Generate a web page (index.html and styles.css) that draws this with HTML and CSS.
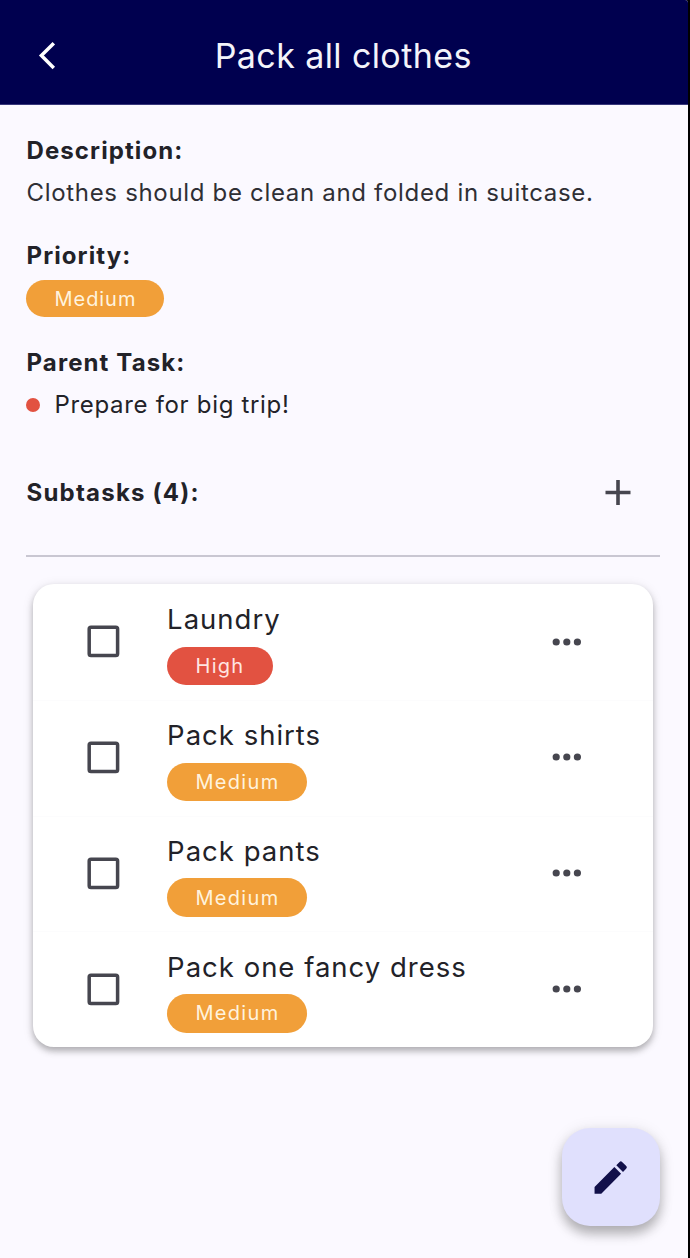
FILE: index.html
```html
<!DOCTYPE html>
<html lang="en">
<head>
<meta charset="utf-8">
<title>Pack all clothes</title>
<link rel="stylesheet" href="styles.css">
</head>
<body>
<div class="screen">
  <header class="appbar">
    <svg class="back" width="30" height="40" viewBox="0 0 30 40"><path d="M24.8 7.2 12.4 19.6 24.8 32" fill="none" stroke="#fff" stroke-width="3.5"/></svg>
    <h1 class="title">Pack all clothes</h1>
  </header>
  <main class="content">
    <h2 class="label label-description">Description:</h2>
    <p class="text text-description">Clothes should be clean and folded in suitcase.</p>
    <h2 class="label label-priority">Priority:</h2>
    <span class="pill pill-main medium">Medium</span>
    <h2 class="label label-parent">Parent Task:</h2>
    <p class="text parent"><span class="dot"></span><span class="parent-name">Prepare for big trip!</span></p>
    <div class="subhead">
      <h2 class="label label-subtasks">Subtasks (4):</h2>
      <svg width="26" height="26" viewBox="0 0 26 26"><path d="M.5 13.5h25M13 1v25" stroke="#46464f" stroke-width="3.6"/></svg>
    </div>
    <ul class="card">
      <li class="row">
        <svg class="box" width="33" height="33" viewBox="0 0 33 33"><rect x="2.2" y="2.2" width="28.4" height="28.4" rx="1.8"/></svg>
        <div class="info"><span class="name">Laundry</span><span class="pill high">High</span></div>
        <svg class="more" width="30" height="8" viewBox="0 0 30 8"><circle cx="4.2" cy="4" r="3.6"/><circle cx="14.8" cy="4" r="3.6"/><circle cx="25.4" cy="4" r="3.6"/></svg>
      </li>
      <li class="row">
        <svg class="box" width="33" height="33" viewBox="0 0 33 33"><rect x="2.2" y="2.2" width="28.4" height="28.4" rx="1.8"/></svg>
        <div class="info"><span class="name">Pack shirts</span><span class="pill medium">Medium</span></div>
        <svg class="more" width="30" height="8" viewBox="0 0 30 8"><circle cx="4.2" cy="4" r="3.6"/><circle cx="14.8" cy="4" r="3.6"/><circle cx="25.4" cy="4" r="3.6"/></svg>
      </li>
      <li class="row">
        <svg class="box" width="33" height="33" viewBox="0 0 33 33"><rect x="2.2" y="2.2" width="28.4" height="28.4" rx="1.8"/></svg>
        <div class="info"><span class="name">Pack pants</span><span class="pill medium">Medium</span></div>
        <svg class="more" width="30" height="8" viewBox="0 0 30 8"><circle cx="4.2" cy="4" r="3.6"/><circle cx="14.8" cy="4" r="3.6"/><circle cx="25.4" cy="4" r="3.6"/></svg>
      </li>
      <li class="row">
        <svg class="box" width="33" height="33" viewBox="0 0 33 33"><rect x="2.2" y="2.2" width="28.4" height="28.4" rx="1.8"/></svg>
        <div class="info"><span class="name">Pack one fancy dress</span><span class="pill medium">Medium</span></div>
        <svg class="more" width="30" height="8" viewBox="0 0 30 8"><circle cx="4.2" cy="4" r="3.6"/><circle cx="14.8" cy="4" r="3.6"/><circle cx="25.4" cy="4" r="3.6"/></svg>
      </li>
    </ul>
  </main>
  <button class="fab" aria-label="Edit">
    <svg width="43" height="43" viewBox="0 0 24 24"><path d="M3.1 17.25V21h3.75L17.91 9.94l-3.75-3.75L3.1 17.25zM20.81 7.04a1 1 0 0 0 0-1.41l-2.34-2.34a1 1 0 0 0-1.41 0l-1.83 1.83 3.75 3.75 1.83-1.83z" fill="#12104a"/></svg>
  </button>
</div>
</body>
</html>
```
FILE: styles.css
```css
* { box-sizing: border-box; }
body { margin: 0; background: #000; font-family: Inter, "Liberation Sans", sans-serif; color: #222228; }
h1, h2, p, ul { margin: 0; padding: 0; }
svg { display: block; flex: none; }
.screen { position: relative; width: 688px; height: 1258px; background: #fbf9ff; overflow: hidden; border-top-right-radius: 3px; }
.appbar { height: 105px; background: #00004f; border-bottom: 1px solid #38377b; display: grid; grid-template-columns: 56px 1fr 56px; align-items: center; padding: 8px 29px 0; }
.title { color: #f4f4fa; font-weight: 400; font-size: 34px; line-height: 40px; letter-spacing: 0.4px; margin-left: -1.5px; text-align: center; white-space: nowrap; }
.content { padding: 31px 28px 0 26px; display: flex; flex-direction: column; }
.label { font-weight: 700; font-size: 24px; line-height: 30px; letter-spacing: 1.1px; white-space: nowrap; padding-left: 0.5px; color: #222228; }
.text { font-weight: 400; font-size: 24px; line-height: 30px; letter-spacing: 0.68px; white-space: nowrap; }
.text-description { margin-top: 12px; padding-left: 0.5px; color: #2f2f35; }
.label-priority { margin-top: 33px; }
.pill { display: flex; align-items: center; align-self: flex-start; height: 38.5px; padding: 0 29px; border-radius: 20px; color: #fff3de; font-weight: 400; font-size: 20px; letter-spacing: 1.3px; }
.pill-main { height: 37px; margin-top: 9px; padding-left: 28.5px; letter-spacing: 0.95px; }
.medium { background: #f19f39; width: 140.5px; }
.pill-main.medium { width: 138px; }
.high { background: #e25241; width: 106px; color: #ffe6e2; }
.label-parent { margin-top: 31px; }
.parent { display: flex; align-items: center; margin-top: 12px; gap: 14.5px; }
.dot { width: 14px; height: 14px; border-radius: 50%; background: #e25241; }
.subhead { display: flex; align-items: center; justify-content: space-between; height: 127.5px; margin-top: 9px; padding-right: 29px; border-bottom: 2px solid #c9c7d2; }
.label-subtasks { padding-top: 2px; letter-spacing: 1.22px; }
.card { list-style: none; margin: 27.5px 7px 0; width: 620px; background: #fff; border-radius: 21px; box-shadow: 0 4px 6px rgba(0,0,0,.25), 0 2px 12px rgba(0,0,0,.1); }
.row { display: flex; height: 115.75px; padding-left: 54px; border-top: 1px solid #fcfcfd; }
.row:first-child { border-top-color: transparent; }
.box { margin-top: 40.4px; fill: none; stroke: #46464f; stroke-width: 3.5; }
.info { margin-left: 46.5px; width: 385px; display: flex; flex-direction: column; padding-top: 17.4px; flex: none; }
.name { font-weight: 400; font-size: 27.5px; line-height: 34px; letter-spacing: 1px; white-space: nowrap; margin-bottom: 10.6px; padding-left: 0.6px; }
.more { margin-top: 52.7px; fill: #46464f; }
.fab { position: absolute; right: 28px; bottom: 32px; width: 98.5px; height: 98px; border: 0; border-radius: 28px; background: #e0e0fd; display: flex; align-items: center; justify-content: center; padding: 0; box-shadow: 0 8px 12px rgba(0,0,0,.26), 0 2px 16px rgba(0,0,0,.1); }
```
